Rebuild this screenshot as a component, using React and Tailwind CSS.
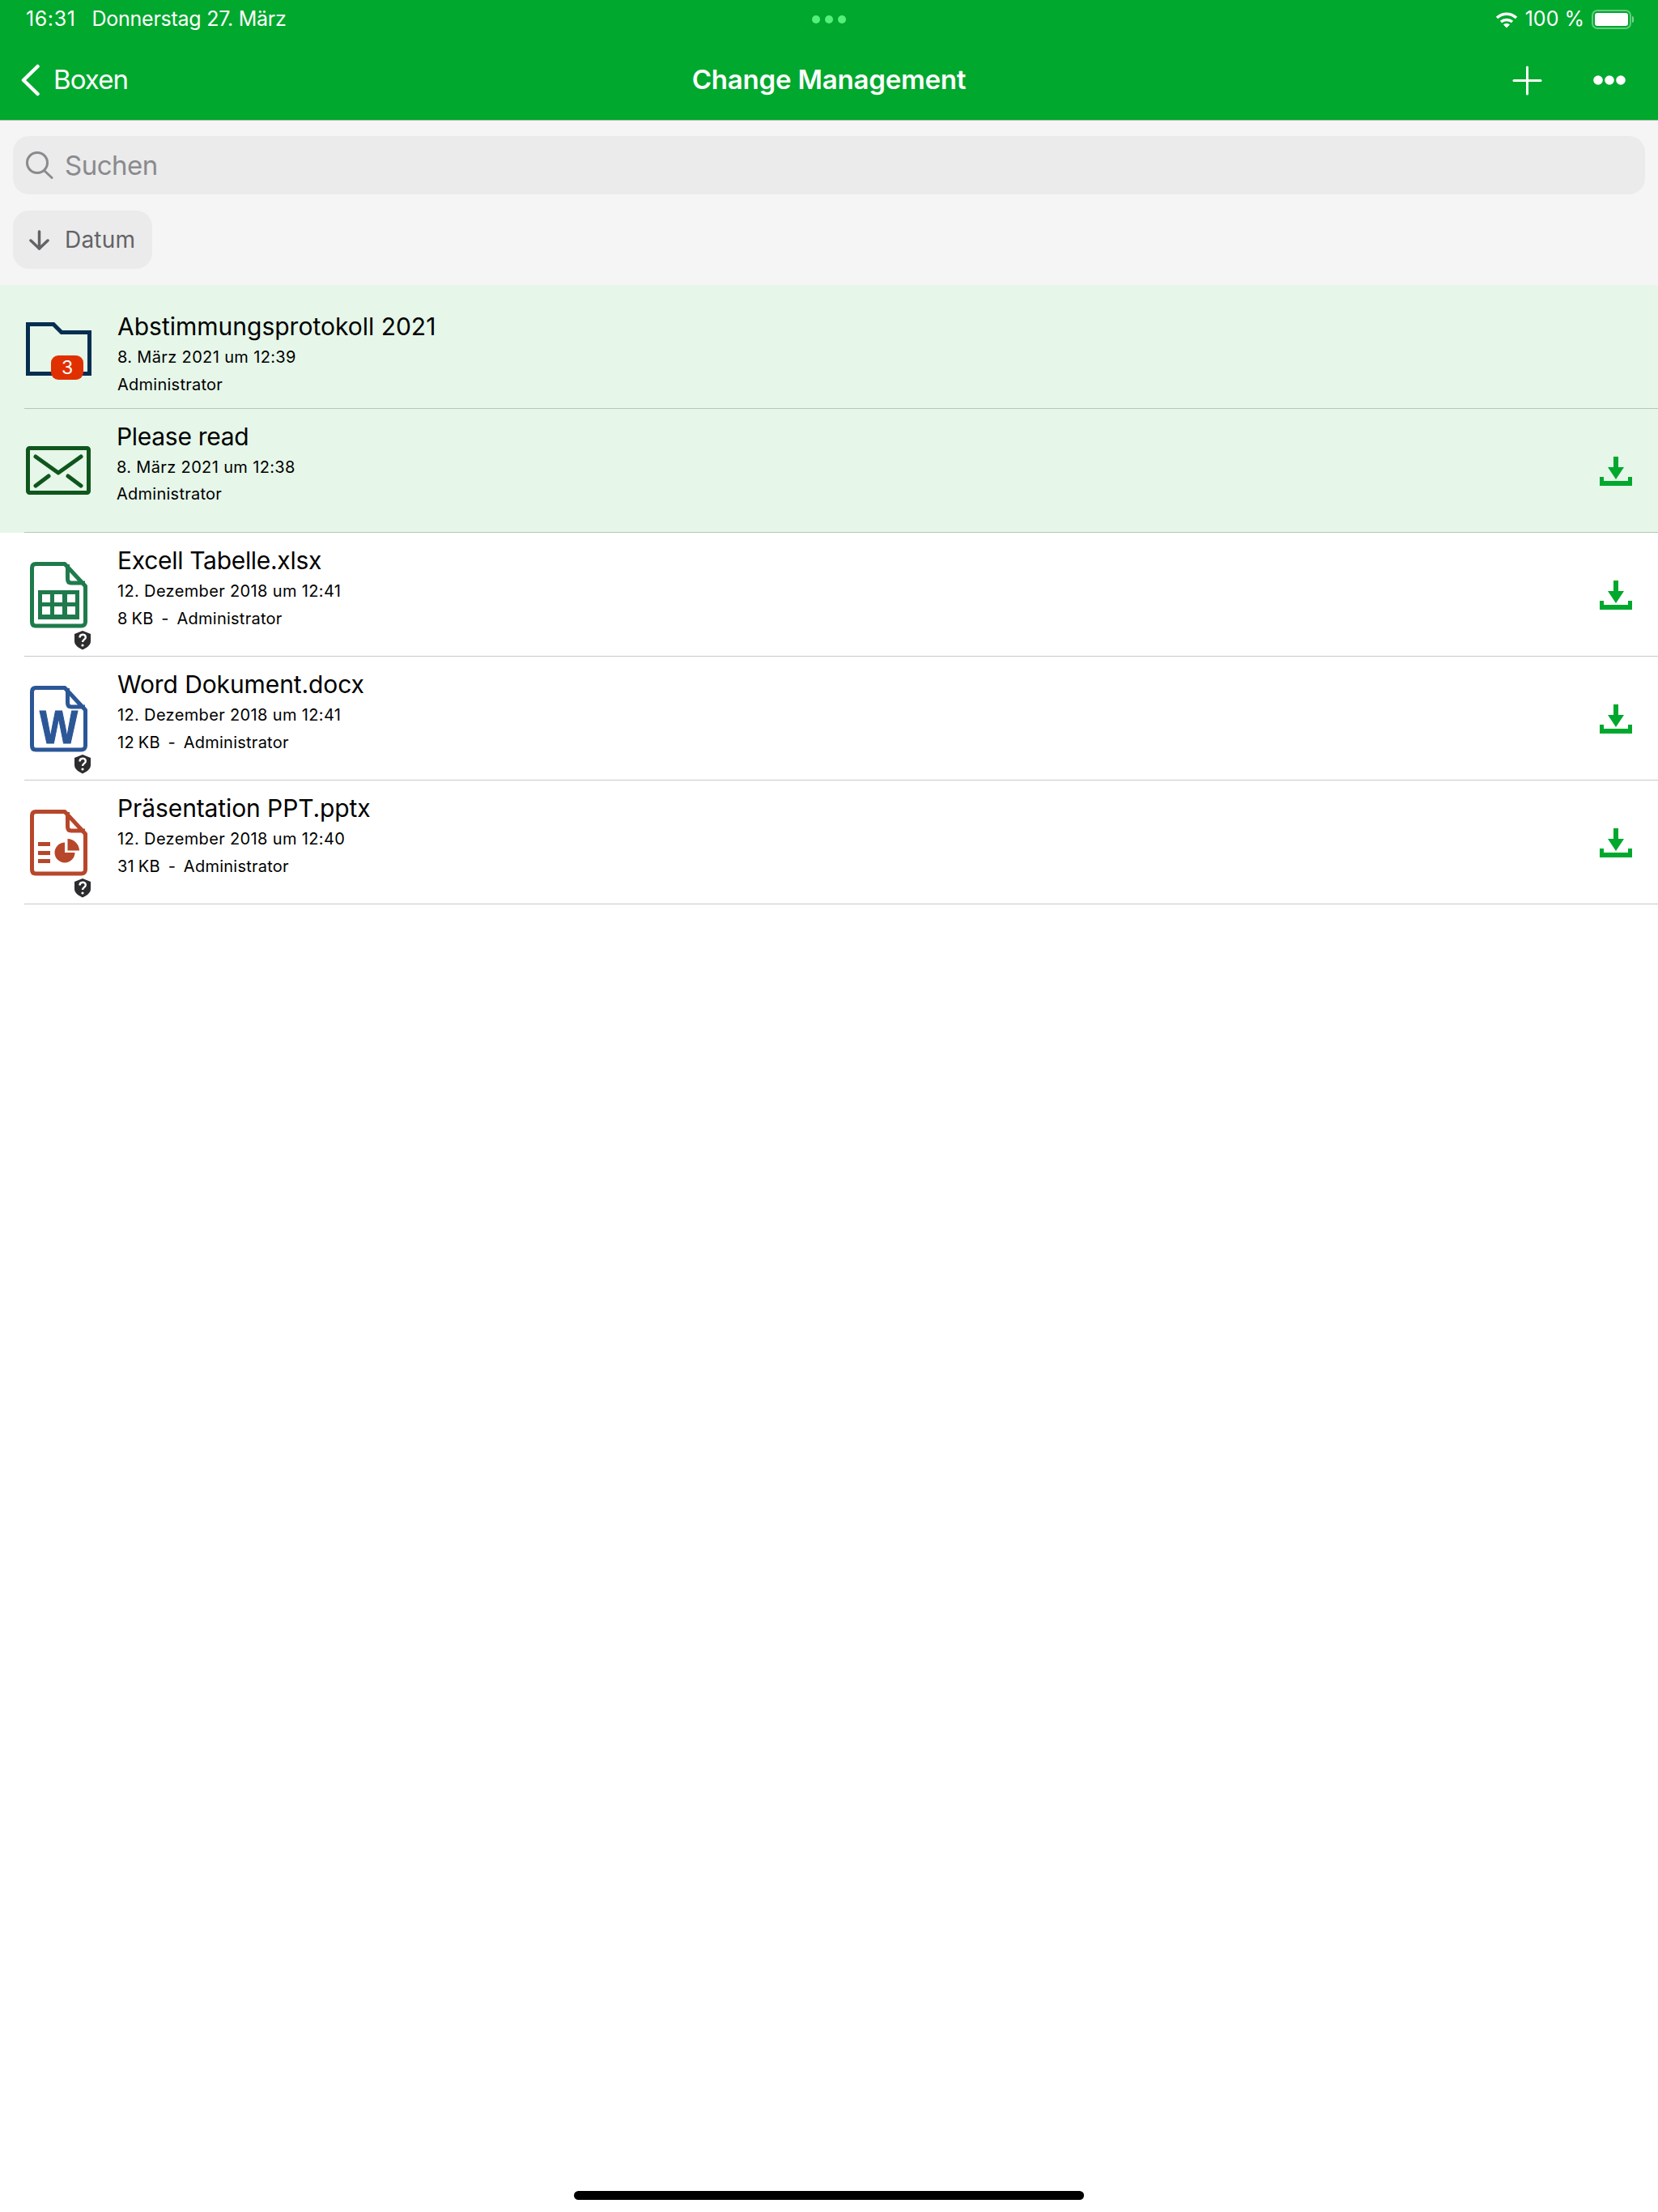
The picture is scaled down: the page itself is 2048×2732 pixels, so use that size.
const GREEN = "#00a82d";

// icons are drawn in row coordinates, the svg starts at x=30 of the row
const FolderIcon = () => (
  <>
    <path d="M34.5 48.5H66L76 58.5H110.5V109.5H34.5Z" fill="none" stroke="#052e50" strokeWidth="5" />
    <rect x="63" y="87" width="40" height="30" rx="9" fill="#e03000" />
    <text x="83" y="110" fontSize="23" fill="#fff" textAnchor="middle" fontFamily="Inter, sans-serif">3</text>
  </>
);

const MailIcon = () => (
  <g fill="none" stroke="#10561c" strokeWidth="5" strokeLinecap="round" strokeLinejoin="round">
    <rect x="34.5" y="48.5" width="75" height="55" rx="2" />
    <path d="M44 59L72 79L100 59" />
    <path d="M44 95L60 83" />
    <path d="M84 83L100 95" />
  </g>
);

const Shield = () => (
  <>
    <path d="M102 121L112 125V134C112 139 107 142 102 144.500C97 142 92 139 92 134V125Z" fill="#2c2c2e" />
    <path d="M98.500 129.500C98.500 124.500 105.800 124.500 105.800 129C105.800 131.800 102 132 102 135" fill="none" stroke="#fff" strokeWidth="2.400" />
    <circle cx="102" cy="139" r="1.600" fill="#fff" />
  </>
);

const DocOutline = ({ color }) => (
  <path
    d="M44 38.500H80L105.500 66V110C105.500 113 103.500 115 100.500 115H44C41 115 39.500 113 39.500 110V43.500C39.500 40.500 41 38.500 44 38.500ZM83.500 39V57C83.500 60 85 62 88 62H105"
    fill="none"
    stroke={color}
    strokeWidth="5"
    strokeLinejoin="round"
  />
);

const ExcelIcon = () => (
  <>
    <DocOutline color="#1f7a4c" />
    <rect x="47" y="71" width="51" height="36" fill="#1f7a4c" />
    {[52, 67, 83].map((x) =>
      [76, 91].map((y) => <rect key={`${x}-${y}`} x={x} y={y} width="10" height="10" fill="#fff" />)
    )}
    <Shield />
  </>
);

const WordIcon = () => (
  <>
    <DocOutline color="#2b5797" />
    <text
      x="49"
      y="107"
      fontSize="57"
      fontWeight="700"
      fill="#2b5797"
      stroke="#2b5797"
      strokeWidth="1.200"
      textLength="47"
      lengthAdjust="spacingAndGlyphs"
      fontFamily="'Liberation Sans', sans-serif"
    >
      W
    </text>
    <Shield />
  </>
);

const PptIcon = () => (
  <>
    <DocOutline color="#b7472a" />
    <rect x="47" y="76" width="15" height="5" fill="#b7472a" />
    <rect x="47" y="87" width="15" height="5" fill="#b7472a" />
    <rect x="47" y="97" width="15" height="5" fill="#b7472a" />
    <path d="M80 77V89H92.500A12.500 12.500 0 1 1 80 76.500Z" fill="#b7472a" />
    <path d="M83.500 72A15 15 0 0 1 98 86.500H83.500Z" fill="#b7472a" />
    <Shield />
  </>
);

const DownloadIcon = () => (
  <svg width="40" height="36" viewBox="0 0 40 36" fill={GREEN} className="shrink-0">
    <rect x="17" y="0" width="6" height="15" />
    <path d="M10 13H30L20 28Z" />
    <path d="M0 25H5V30H35V25H40V36H0Z" />
  </svg>
);

const rows = [
  { icon: <FolderIcon />, title: "Abstimmungsprotokoll 2021", date: "8. März 2021 um 12:39", meta: "Administrator", tinted: true, textClass: "-ml-px pt-[32px]", titleClass: "tracking-[0px]", metaClass: "" },
  { icon: <MailIcon />, title: "Please read", date: "8. März 2021 um 12:38", meta: "Administrator", tinted: true, download: true, textClass: "-ml-[2px] pt-[15px]", titleClass: "tracking-[-0.3px]", metaClass: "-mt-px" },
  { icon: <ExcelIcon />, title: "Excell Tabelle.xlsx", date: "12. Dezember 2018 um 12:41", meta: "8 KB  -  Administrator", download: true, textClass: "-ml-px pt-[15px]", titleClass: "tracking-[-0.3px]", metaClass: "" },
  { icon: <WordIcon />, title: "Word Dokument.docx", date: "12. Dezember 2018 um 12:41", meta: "12 KB  -  Administrator", download: true, textClass: "-ml-px pt-[15px]", titleClass: "tracking-[-0.1px]", metaClass: "" },
  { icon: <PptIcon />, title: "Präsentation PPT.pptx", date: "12. Dezember 2018 um 12:40", meta: "31 KB  -  Administrator", download: true, textClass: "-ml-px pt-[15px]", titleClass: "tracking-[-0.1px]", metaClass: "" },
];

const Row = ({ row }) => (
  <div className={`pl-[30px] ${row.tinted ? "bg-[#e6f6e9]" : "bg-white"}`}>
    <div className={`flex h-[153px] border-b ${row.tinted ? "border-[#b6c6b8]" : "border-[#c9c9c9]"}`}>
      <svg width="116" height="152" viewBox="30 0 116 152" className="shrink-0">
        {row.icon}
      </svg>
      <div className={`flex-1 ${row.textClass} text-black`}>
        <div className={`h-[38px] text-[30px] leading-[38px] ${row.titleClass}`}>{row.title}</div>
        <div className="h-[38px] text-[20px] leading-[38px] tracking-[0.35px]">{row.date}</div>
        <div className={`h-[30px] whitespace-pre text-[20px] leading-[30px] tracking-[0.25px] [word-spacing:-1px] ${row.metaClass}`}>{row.meta}</div>
      </div>
      {row.download && (
        <div className="flex items-center pr-[32px] pt-[2px]">
          <DownloadIcon />
        </div>
      )}
    </div>
  </div>
);

export default function App() {
  return (
    <div className="flex min-h-[2732px] flex-col bg-white font-['Inter',sans-serif]">
      {/* Status bar + nav */}
      <header className="h-[149px] border-b border-[#a9bcab] bg-[#00a82d] text-white">
        <div className="grid h-[48px] grid-cols-[1fr_auto_1fr] items-center text-[25px]">
          <div className="flex gap-[20px] pl-[32px]">
            <span className="tracking-[0.6px]">16:31</span>
            <span className="tracking-[-0.25px]">Donnerstag 27. März</span>
          </div>
          <div className="flex gap-[6px]">
            <span className="h-[10px] w-[10px] rounded-full bg-[#55f07c]" />
            <span className="h-[10px] w-[10px] rounded-full bg-[#55f07c]" />
            <span className="h-[10px] w-[10px] rounded-full bg-[#55f07c]" />
          </div>
          <div className="flex items-center justify-end pr-[30px]">
            <svg width="28" height="21" viewBox="0 0 28 21" fill="none" stroke="#fff" strokeWidth="3.500">
              <path d="M2 8C9 1.500 19 1.500 26 8" />
              <path d="M7 13C11 9.500 17 9.500 21 13" />
              <path d="M14 20L10.500 16.500C12.500 15 15.500 15 17.500 16.500Z" fill="#fff" strokeWidth="1" />
            </svg>
            <span className="ml-[9px]">100 %</span>
            <div className="ml-[9px] flex items-center">
              <div className="h-[24px] w-[49px] rounded-[7px] border-2 border-white/40 p-[2px]">
                <div className="h-full w-full rounded-[3px] bg-white" />
              </div>
              <div className="ml-[1px] h-[8px] w-[2px] rounded-r-full bg-white/50" />
            </div>
          </div>
        </div>
        <nav className="grid h-[100px] grid-cols-[1fr_auto_1fr] items-center pt-[2px]">
          <div className="flex items-center gap-[16px] pl-[25px] text-[33px] tracking-[-0.9px]">
            <svg width="25" height="40" viewBox="0 0 25 40" fill="none" stroke="#fff" strokeWidth="4.500" strokeLinecap="round" strokeLinejoin="round">
              <path d="M21.500 3L4 20L21.500 37" />
            </svg>
            <span>Boxen</span>
          </div>
          <div className="text-[33px] font-semibold tracking-[-0.2px]">Change Management</div>
          <div className="flex items-center justify-end gap-[63px] pr-[40px]">
            <svg width="37" height="37" viewBox="0 0 37 37" fill="none" stroke="#fff" strokeWidth="3" strokeLinecap="round">
              <path d="M18.500 2V35" />
              <path d="M2 18.500H35" />
            </svg>
            <svg width="40" height="12" viewBox="0 0 40 12" fill="#fff">
              <circle cx="6" cy="6" r="5.800" />
              <circle cx="20" cy="6" r="5.800" />
              <circle cx="34" cy="6" r="5.800" />
            </svg>
          </div>
        </nav>
      </header>

      {/* Search + sort */}
      <div className="h-[203px] bg-[#f5f5f5] px-[16px] pt-[19px]">
        <div className="flex h-[72px] items-center gap-[14px] rounded-[20px] bg-[#ebebeb] pl-[15px] text-[33px] tracking-[-0.5px] text-[#8a8a8e]">
          <svg width="35" height="34" viewBox="0 0 35 34" fill="none" stroke="#8a8a8e" strokeWidth="3" strokeLinecap="round">
            <circle cx="15" cy="14" r="12.500" />
            <path d="M24 24L33 32.500" />
          </svg>
          <span className="pt-[2px]">Suchen</span>
        </div>
        <div className="mt-[20px] flex h-[72px] w-[172px] items-center gap-[19px] rounded-[20px] bg-[#ebebeb] pl-[20px] text-[28px] tracking-[0.2px] text-[#636366]">
          <svg width="25" height="25" viewBox="0 0 25 25" fill="none" stroke="#636366" strokeWidth="3.500" strokeLinecap="round" strokeLinejoin="round">
            <path d="M12.500 2V23" />
            <path d="M2 13L12.500 23L23 13" />
          </svg>
          <span>Datum</span>
        </div>
      </div>

      {/* Items */}
      <div>
        {rows.map((row) => (
          <Row key={row.title} row={row} />
        ))}
      </div>

      {/* Home indicator */}
      <div className="mt-auto flex justify-center pb-[15px]">
        <div className="h-[11px] w-[630px] rounded-full bg-black" />
      </div>
    </div>
  );
}
